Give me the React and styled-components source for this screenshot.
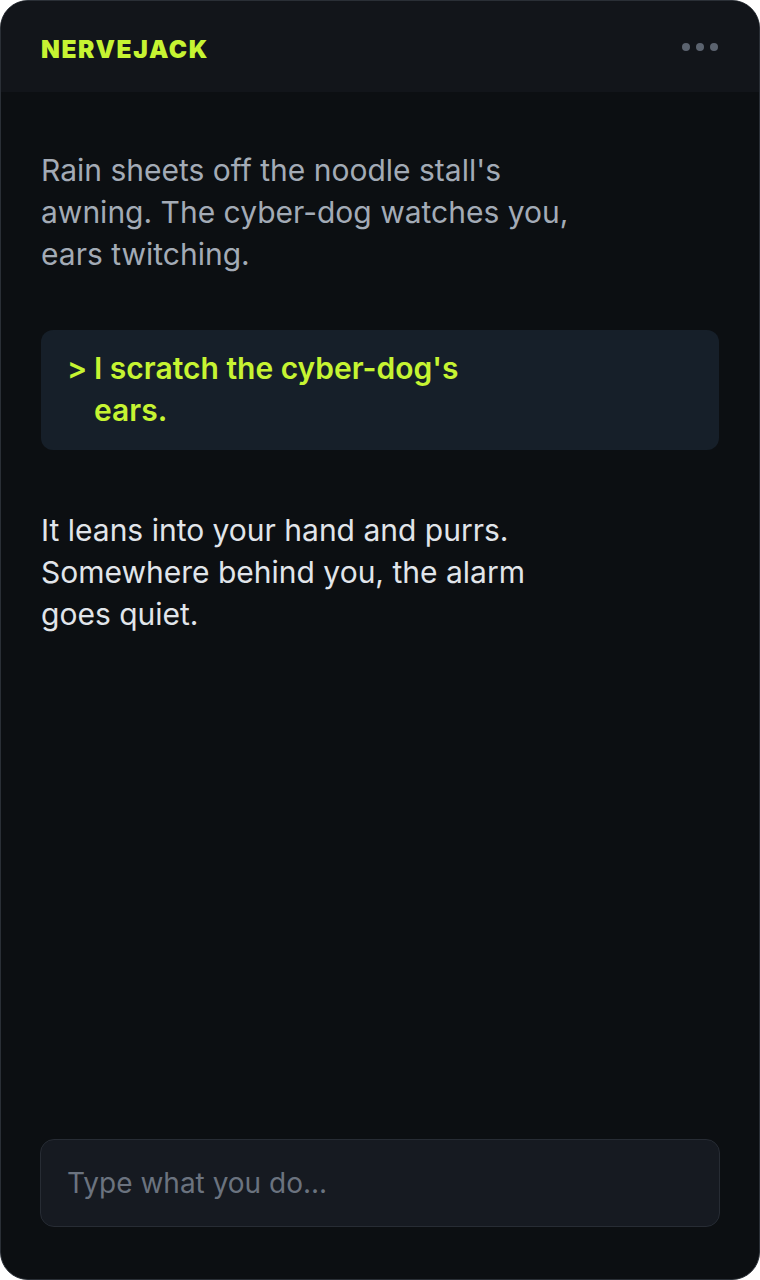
import React from "react";
import styled, { createGlobalStyle } from "styled-components";

const GlobalStyle = createGlobalStyle`
  html, body {
    margin: 0;
    padding: 0;
    background: #ffffff;
  }
  * {
    box-sizing: border-box;
  }
`;

const Shell = styled.div`
  width: 760px;
  height: 1280px;
  display: flex;
  flex-direction: column;
  background: #0c0f12;
  border: 1px solid #2a2f36;
  border-radius: 28px;
  overflow: hidden;
  font-family: Inter, "Noto Sans", sans-serif;
`;

const Header = styled.header`
  height: 91px;
  flex-shrink: 0;
  display: flex;
  align-items: center;
  justify-content: space-between;
  padding: 0 41px 0 40px;
  background: #12151a;
`;

const Logo = styled.div`
  font-family: Inter, sans-serif;
  font-weight: 900;
  font-size: 24.5px;
  letter-spacing: 1.6px;
  color: #c6f432;
  margin-top: 4px;
`;

const Menu = styled.button`
  display: flex;
  gap: 6px;
  padding: 0;
  margin: 0;
  background: none;
  border: 0;
  cursor: pointer;
  span {
    width: 8px;
    height: 8px;
    border-radius: 50%;
    background: #5b636f;
  }
`;

const Feed = styled.main`
  flex: 1;
  display: flex;
  flex-direction: column;
  gap: 55px;
  padding: 57px 40px 0 40px;
`;

const Narration = styled.p`
  margin: 0;
  max-width: 544px;
  font-size: 30px;
  line-height: 42px;
  color: ${(p) => (p.$latest ? "#e1e5ea" : "#a3abb6")};
`;

const Action = styled.div`
  display: flex;
  margin-bottom: 4px;
  padding: 17px 26px 19px 26px;
  border-radius: 12px;
  background: #161f29;
  color: #c6f432;
  font-size: 30px;
  line-height: 42px;
  font-weight: 600;
`;

const Prompt = styled.span`
  width: 27px;
  flex-shrink: 0;
`;

const ActionText = styled.span`
  max-width: 400px;
`;

const Composer = styled.div`
  padding: 0 39px 52px 39px;
`;

const Input = styled.input`
  width: 100%;
  height: 88px;
  padding: 0 26px;
  border-radius: 14px;
  border: 1px solid #272c34;
  background: #161a21;
  color: #e1e5ea;
  font-family: Inter, sans-serif;
  font-size: 28px;
  outline: none;
  &::placeholder {
    color: #6b737f;
  }
`;

export default function App() {
  return (
    <>
      <GlobalStyle />
      <Shell>
        <Header>
          <Logo>NERVEJACK</Logo>
          <Menu aria-label="Menu">
            <span />
            <span />
            <span />
          </Menu>
        </Header>
        <Feed>
          <Narration>
            Rain sheets off the noodle stall's awning. The cyber-dog watches
            you, ears twitching.
          </Narration>
          <Action>
            <Prompt>&gt;</Prompt>
            <ActionText>I scratch the cyber-dog's ears.</ActionText>
          </Action>
          <Narration $latest>
            It leans into your hand and purrs. Somewhere behind you, the alarm
            goes quiet.
          </Narration>
        </Feed>
        <Composer>
          <Input placeholder="Type what you do..." />
        </Composer>
      </Shell>
    </>
  );
}
